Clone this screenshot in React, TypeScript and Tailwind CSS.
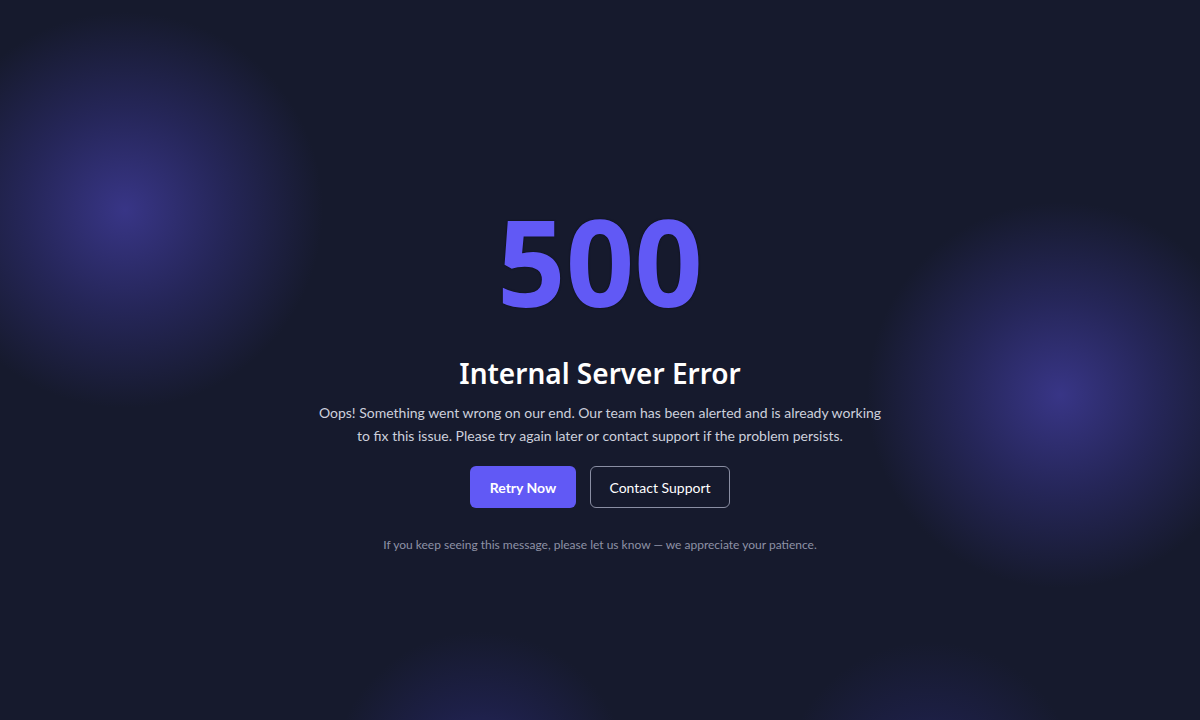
export default function App() {
  return (
    <main className="relative flex h-[720px] w-full justify-center overflow-hidden bg-[#161a2d] font-['Lato',sans-serif] text-white">
      {/* glow blobs */}
      <div className="pointer-events-none absolute left-[-75px] top-[10px] h-[400px] w-[400px] rounded-full bg-[radial-gradient(circle,rgba(62,58,150,0.85)_0%,rgba(50,48,125,0.55)_35%,rgba(22,26,45,0)_70%)]" />
      <div className="pointer-events-none absolute left-[865px] top-[200px] h-[390px] w-[390px] rounded-full bg-[radial-gradient(circle,rgba(62,58,150,0.85)_0%,rgba(50,48,125,0.55)_35%,rgba(22,26,45,0)_70%)]" />
      <div className="pointer-events-none absolute left-[330px] top-[630px] h-[300px] w-[300px] rounded-full bg-[radial-gradient(circle,rgba(50,48,130,0.65)_0%,rgba(40,40,110,0.4)_35%,rgba(22,26,45,0)_70%)]" />
      <div className="pointer-events-none absolute left-[780px] top-[640px] h-[300px] w-[300px] rounded-full bg-[radial-gradient(circle,rgba(50,48,130,0.55)_0%,rgba(40,40,110,0.33)_35%,rgba(22,26,45,0)_70%)]" />

      <div className="relative flex flex-col items-center pt-[201px] text-center">
        <h1 className="font-['Open_Sans',sans-serif] text-[120px] font-bold leading-none text-[#6159f5] [text-shadow:0_0_2px_rgba(0,0,0,0.6)]">
          500
        </h1>
        <h2 className="mt-[35px] font-['Noto_Sans',sans-serif] text-[28px] font-semibold leading-tight text-white">
          Internal Server Error
        </h2>
        <p className="mt-[10px] text-[14px] leading-[23px] text-[#cdd0dc]">
          <span className="block whitespace-nowrap">
            Oops! Something went wrong on our end. Our team has been alerted and is already working
          </span>
          <span className="block whitespace-nowrap">
            to fix this issue. Please try again later or contact support if the problem persists.
          </span>
        </p>
        <div className="mt-[19px] flex gap-[14px]">
          <button className="h-[42px] w-[106px] rounded-md bg-[#6159f5] text-[14px] font-bold text-white">
            Retry Now
          </button>
          <button className="h-[42px] w-[140px] rounded-md border border-[#8a8ea3] bg-transparent text-[14px] text-white">
            Contact Support
          </button>
        </div>
        <p className="mt-[28px] text-[12px] text-[#8e92a6]">
          If you keep seeing this message, please let us know — we appreciate your patience.
        </p>
      </div>
    </main>
  )
}
